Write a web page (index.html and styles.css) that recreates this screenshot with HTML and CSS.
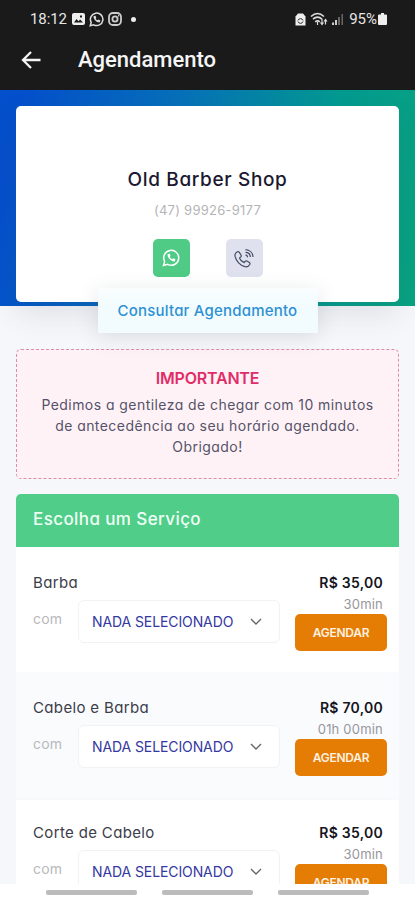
FILE: index.html
```html
<!DOCTYPE html>
<html lang="pt-BR">
<head>
  <meta charset="UTF-8">
  <meta name="viewport" content="width=device-width, initial-scale=1.0">
  <title>Agendamento</title>
  <link rel="stylesheet" href="styles.css">
</head>
<body>
  <div class="screen">
    <!-- Top: status bar and app bar -->
    <header class="top">
      <div class="status-bar">
        <div class="status-left">
          <span class="clock">18:12</span>
          <svg class="image-icon" width="13" height="12" viewBox="0 0 13 12"><rect width="13" height="12" rx="2" fill="#eee"/><path d="M2 9.500l2.500-3.500 2 2.300 1.600-1.800 2.900 3z" fill="#1a1a1a"/><rect x="8" y="2.500" width="2" height="2" fill="#1a1a1a"/></svg>
          <svg width="15" height="15" viewBox="0 0 24 24" fill="none" stroke="#ddd" stroke-width="2.400"><path d="M2 22l1.500-5.500A10 10 0 1 1 7.500 20.500z"/><path d="M7.500 6.500c-1.500 4 4.500 11 9.800 10l1-3-3.300-1.500-1.300 1.300c-1.500-.5-2.500-1.500-3-3l1-1.200L10.300 6z" fill="#ddd" stroke="none"/></svg>
          <svg width="14" height="14" viewBox="0 0 14 14" fill="none" stroke="#ccc" stroke-width="1.800"><rect x="1" y="1" width="12" height="12" rx="4"/><circle cx="7" cy="7" r="2.600"/><path d="M10 3.600h1.200"/></svg>
          <span class="dot"></span>
        </div>
        <div class="status-right">
          <svg width="11" height="13" viewBox="0 0 11 13"><path d="M.5 3.500L3 .5h5l2.500 3v9H.5z" fill="#eee"/><path d="M3 7.500a2.600 2.600 0 0 1 5 0M8 8.500a2.600 2.600 0 0 1-5 0" fill="none" stroke="#333" stroke-width="1"/></svg>
          <svg class="wifi-icon" width="18" height="15" viewBox="0 0 18 15" fill="none" stroke="#ddd" stroke-width="1.600"><path d="M1 4.500q6.500-6 13 0M3 7.200q4.500-4.200 9 0M5.200 9.800q2.300-2 4.600 0"/><path d="M7.500 10v3M12 7v5M10.500 10.500l1.500 2 1.500-2M15.500 12.500V8M14 9.500l1.500-2 1.500 2" stroke-width="1.200"/></svg>
          <svg width="12" height="12" viewBox="0 0 12 12"><path d="M0 9.500h2V12H0zM3 7h2v5H3z" fill="#ccc"/><path d="M6 4h2v8H6zM9.500 1H11v11H9.500z" fill="#666"/></svg>
          <span class="battery">95%</span>
          <svg class="battery-icon" width="9" height="12" viewBox="0 0 9 12"><path d="M3 0h3v1.500h2q1 0 1 1V11q0 1-1 1H1q-1 0-1-1V2.500q0-1 1-1h2z" fill="#eee"/></svg>
        </div>
      </div>
      <div class="app-bar">
        <svg class="back" width="20" height="18" viewBox="0 0 20 18" fill="none" stroke="#f5f5f5" stroke-width="2.300"><path d="M19.500 9H2M10 1L2 9l8 8"/></svg>
        <h1>Agendamento</h1>
      </div>
    </header>

    <main class="content">
      <!-- Shop card -->
      <section class="hero">
        <div class="shop-card">
          <h2>Old Barber Shop</h2>
          <p class="phone">(47) 99926-9177</p>
          <div class="contacts">
            <button class="contact whatsapp" aria-label="WhatsApp">
              <svg width="18" height="18" viewBox="0 0 24 24" fill="none" stroke="#fff" stroke-width="2"><path d="M2 22l1.500-5.500A10 10 0 1 1 7.500 20.500z"/><path d="M7.800 6.500c-2 3.500 4.500 11 9.200 10l1-2.700-3-1.500-1.300 1.300c-1.500-.5-2.800-1.800-3.300-3.300l1-1.200-1-2.800z" fill="#fff" stroke="none"/></svg>
            </button>
            <button class="contact call" aria-label="Ligar">
              <svg width="20" height="20" viewBox="0 0 20 20" fill="none" stroke="#454a66" stroke-width="1.200"><path d="M3.300 3.700C1.800 4.500.6 5.900 1 8.200c1 4.800 5.200 9.300 10 10.500 2.300.5 3.900-.6 4.900-2.500.3-.7 0-1.300-.5-1.700l-2.500-1.500c-.8-.4-1.300-.2-1.800.4l-.8 1.200c-2-.6-4.200-2.900-4.800-4.700l1.300-1c.5-.5.6-1 .3-1.600L5.200 4.200c-.5-.7-1.200-.8-1.900-.5z"/><path d="M11.500 7.200a2 2 0 0 1 2 2M11.500 4.400c2.700 0 4.700 2 4.800 4.700M11.500 1.600c4.400.2 7.300 3.200 7.500 7.400"/></svg>
            </button>
          </div>
        </div>
        <a class="consult" href="#"><span>Consultar Agendamento</span></a>
      </section>

      <section class="notice">
        <h3>IMPORTANTE</h3>
        <p>Pedimos a gentileza de chegar com 10 minutos</p>
        <p>de antecedência ao seu horário agendado.</p>
        <p>Obrigado!</p>
      </section>

      <!-- Services list -->
      <section class="services">
        <h3><span>Escolha um Serviço</span></h3>
        <div class="service">
          <div class="service-main">
            <p class="name">Barba</p>
            <div class="pick">
              <span class="with">com</span>
              <div class="select"><span>NADA SELECIONADO</span><svg width="12" height="8" viewBox="0 0 12 8"><path d="M1 1l5 5 5-5"/></svg></div>
            </div>
          </div>
          <div class="service-side">
            <p class="price">R$ 35,00</p>
            <p class="time">30min</p>
            <button class="book">AGENDAR</button>
          </div>
        </div>
        <div class="service alt">
          <div class="service-main">
            <p class="name">Cabelo e Barba</p>
            <div class="pick">
              <span class="with">com</span>
              <div class="select"><span>NADA SELECIONADO</span><svg width="12" height="8" viewBox="0 0 12 8"><path d="M1 1l5 5 5-5"/></svg></div>
            </div>
          </div>
          <div class="service-side">
            <p class="price">R$ 70,00</p>
            <p class="time">01h 00min</p>
            <button class="book">AGENDAR</button>
          </div>
        </div>
        <div class="service">
          <div class="service-main">
            <p class="name">Corte de Cabelo</p>
            <div class="pick">
              <span class="with">com</span>
              <div class="select"><span>NADA SELECIONADO</span><svg width="12" height="8" viewBox="0 0 12 8"><path d="M1 1l5 5 5-5"/></svg></div>
            </div>
          </div>
          <div class="service-side">
            <p class="price">R$ 35,00</p>
            <p class="time">30min</p>
            <button class="book">AGENDAR</button>
          </div>
        </div>
      </section>
    </main>

    <!-- Gesture hints -->
    <footer class="gestures"><i></i><i></i><i></i></footer>
  </div>
</body>
</html>
```
FILE: styles.css
```css
* {
  margin: 0;
  padding: 0;
  box-sizing: border-box;
}

body {
  font-family: Inter, "Open Sans", sans-serif;
  font-feature-settings: "cv11";
  background-color: #f6f7fa;
  color: #3c3d4a;
}

button {
  border: none;
  font-family: inherit;
  font-feature-settings: inherit;
}

p, span, h1, h2, h3 {
  white-space: nowrap;
}

.screen {
  display: flex;
  flex-direction: column;
  height: 900px;
  overflow: hidden;
}

/* Dark header */
.top {
  flex: none;
  height: 90px;
  background-color: #1a1a1a;
  color: #f5f5f5;
  font-family: Roboto, sans-serif;
}

.status-bar {
  display: flex;
  justify-content: space-between;
  height: 37px;
  padding: 1px 28px 0 30px;
}

.status-left, .status-right {
  display: flex;
  align-items: center;
}

.status-left {
  gap: 4px;
}

.status-right {
  gap: 4px;
}

.clock, .battery {
  font-size: 15px;
  color: #e6e6e6;
}

.clock {
  width: 38px;
  letter-spacing: -0.1px;
}

.battery {
  margin-left: 1px;
}

.battery-icon {
  margin-left: -3px;
}

.dot {
  width: 5px;
  height: 5px;
  margin-left: 5px;
  border-radius: 50%;
  background-color: #eee;
}

.app-bar {
  display: flex;
  align-items: center;
  gap: 37px;
  height: 45px;
  padding-left: 21px;
}

h1 {
  font-size: 22px;
  font-weight: 500;
}

.content {
  flex: 1;
  min-height: 0;
  overflow: hidden;
}

/* Hero with gradient */
.hero {
  height: 216px;
  padding: 16px 16px 0;
  background: linear-gradient(100deg, #0450cc 5%, #0670b9 40%, #039a91 75%, #08a37f 100%);
}

.shop-card {
  display: flex;
  flex-direction: column;
  align-items: center;
  height: 196px;
  padding-top: 60px;
  border-radius: 5px;
  background-color: #fff;
  box-shadow: 0 12px 30px rgba(60, 65, 90, 0.12);
}

h2 {
  font-size: 19px;
  line-height: 28px;
  font-weight: 500;
  letter-spacing: 0.65px;
  color: #1b1830;
}

.phone {
  margin-top: 6px;
  font-size: 13px;
  line-height: 20px;
  letter-spacing: 0.25px;
  color: #b5b5b8;
}

.contacts {
  display: flex;
  gap: 36px;
  margin-top: 19px;
}

.contact {
  display: flex;
  align-items: center;
  justify-content: center;
  width: 37px;
  height: 38px;
  border-radius: 5px;
}

.whatsapp {
  background-color: #4fcb86;
}

.call {
  background-color: #dfe2ee;
}

.consult {
  position: relative;
  display: flex;
  justify-content: center;
  width: 220px;
  height: 45px;
  margin: -14px auto 0;
  padding-top: 12px;
  background: linear-gradient(#fafdfe, #f2fcfe 35%);
  box-shadow: 0 4px 22px rgba(60, 75, 95, 0.14);
  color: #2d91d3;
  font-size: 15px;
  line-height: 22px;
  font-weight: 500;
  letter-spacing: 0.2px;
  text-decoration: none;
}

/* Pink notice */
.notice {
  height: 130px;
  margin: 43px 16px 0;
  padding-top: 18px;
  border: 1px dashed #e08ca6;
  border-radius: 5px;
  background-color: #fff2f6;
  text-align: center;
  font-size: 14px;
  line-height: 21px;
  letter-spacing: 0.44px;
  color: #55536a;
}

.notice h3 {
  margin-bottom: 6px;
  font-size: 16px;
  line-height: 20px;
  font-weight: 600;
  letter-spacing: -0.2px;
  color: #e12c68;
}

/* Services */
.services {
  margin: 15px 16px 0;
}

.services h3 {
  height: 53px;
  padding: 13px 17px;
  border-radius: 5px 5px 0 0;
  background-color: #50cd89;
  color: #effff5;
  font-size: 17px;
  line-height: 25px;
  font-weight: 500;
  letter-spacing: 0.4px;
}

.service {
  display: flex;
  justify-content: space-between;
  height: 125px;
  padding: 25px 12px 0 17px;
  background-color: #fff;
}

.service.alt {
  background-color: #fafbfd;
}

.service.alt + .service {
  padding-top: 22px;
  border-top: 3px solid #f8f9fb;
}

.name {
  font-size: 15px;
  line-height: 22px;
  letter-spacing: 0.35px;
}

.pick {
  display: flex;
  margin-top: 6px;
}

.with {
  width: 45px;
  padding-top: 8px;
  font-size: 14px;
  line-height: 22px;
  letter-spacing: 0.2px;
  color: #b7b8bc;
}

.select {
  display: flex;
  align-items: center;
  justify-content: space-between;
  width: 202px;
  height: 43px;
  padding: 0 17px 0 13px;
  border: 1px solid #f1f2f5;
  border-radius: 6px;
  background-color: #fff;
  color: #3538a0;
  font-size: 14px;
  letter-spacing: -0.1px;
}

.select svg {
  fill: none;
  stroke: #666;
  stroke-width: 1.4;
}

.service-side {
  display: flex;
  flex-direction: column;
  align-items: flex-end;
}

.price {
  padding-right: 4px;
  font-size: 14px;
  line-height: 22px;
  font-weight: 600;
  letter-spacing: 0.25px;
  color: #15151e;
}

.time {
  padding-right: 4px;
  font-size: 13px;
  line-height: 20px;
  letter-spacing: 0.2px;
  color: #96979d;
}

.book {
  width: 92px;
  height: 37px;
  border-radius: 5px;
  background-color: #e57d04;
  color: #fff1e0;
  font-size: 12px;
  font-weight: 600;
  letter-spacing: -0.25px;
}

/* Bottom gesture bars */
.gestures {
  display: flex;
  flex: none;
  justify-content: center;
  gap: 25px;
  height: 16px;
  padding-top: 6px;
  background-color: #fff;
}

.gestures i {
  width: 91px;
  height: 5px;
  border-radius: 2px;
  background-color: #bbb;
}
```
